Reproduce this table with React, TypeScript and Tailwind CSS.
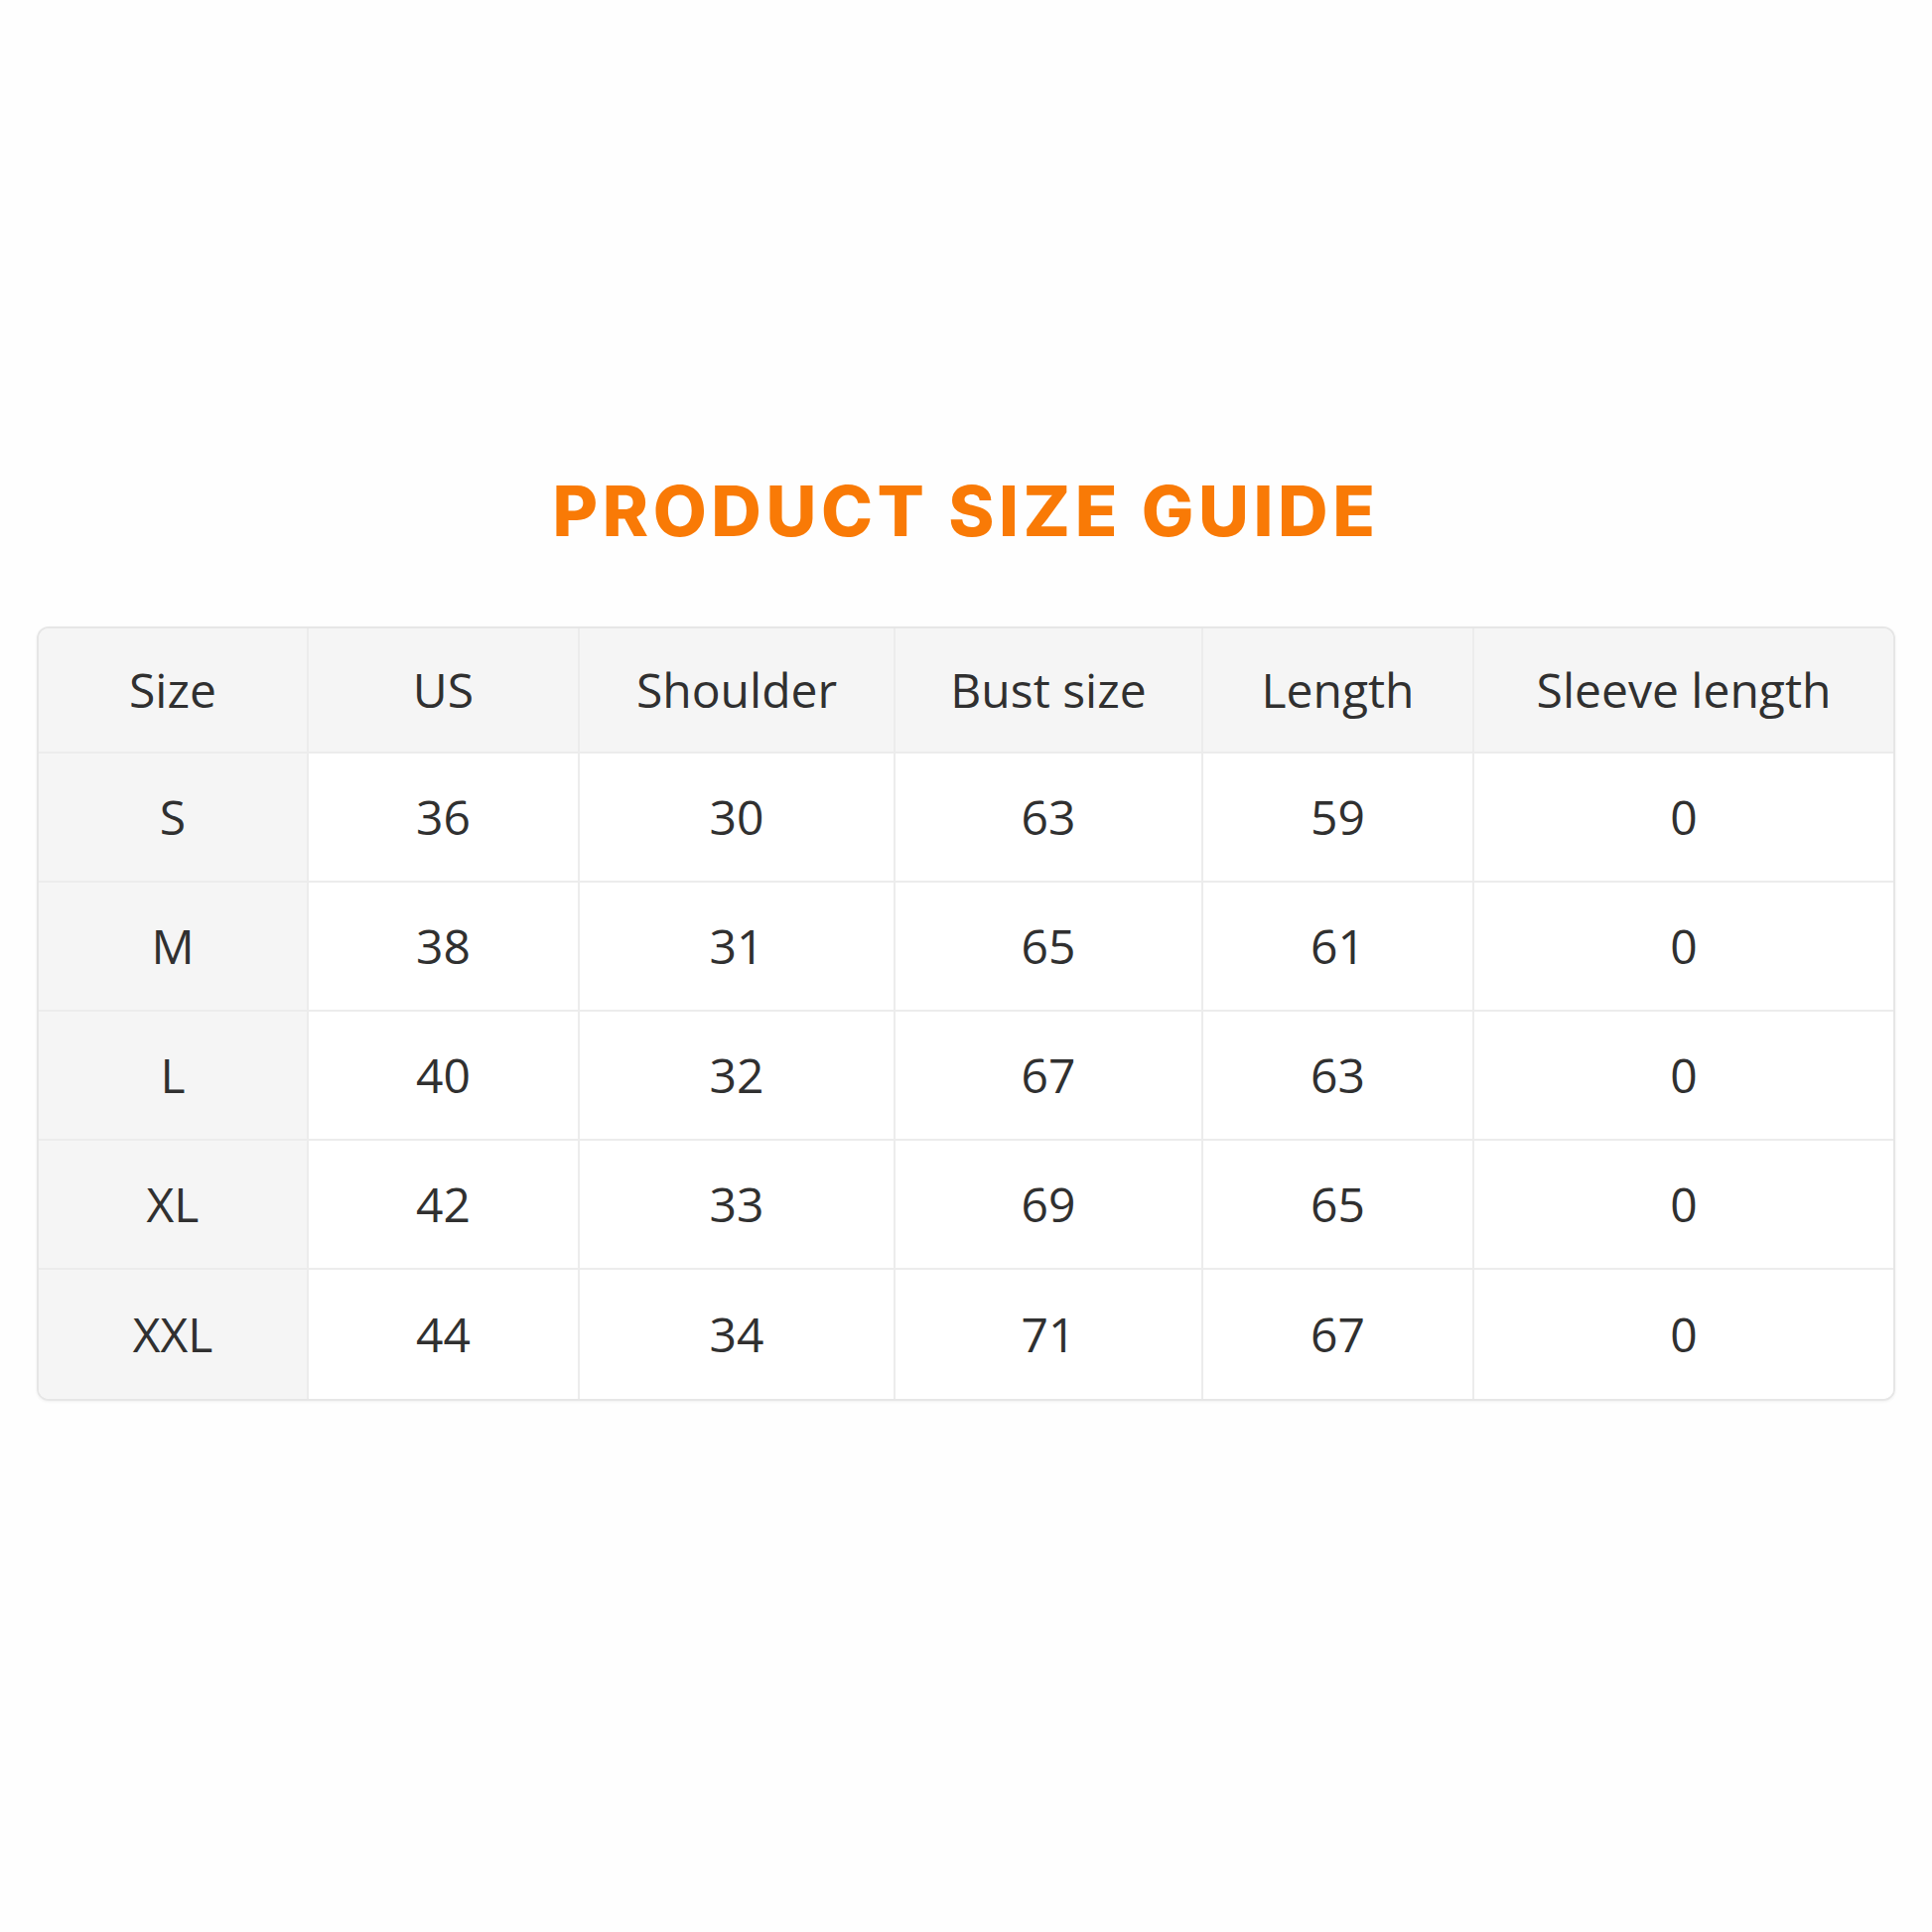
const header = ['Size', 'US', 'Shoulder', 'Bust size', 'Length', 'Sleeve length'];

const rows = [
  ['S', '36', '30', '63', '59', '0'],
  ['M', '38', '31', '65', '61', '0'],
  ['L', '40', '32', '67', '63', '0'],
  ['XL', '42', '33', '69', '65', '0'],
  ['XXL', '44', '34', '71', '67', '0'],
];

export default function App() {
  return (
    <div className="w-[1946px] h-[1946px] bg-[#fefefe] font-['Open_Sans',sans-serif] pt-[477px]">
      {/* Titulo */}
      <h1 className="text-center font-['Inter',sans-serif] font-extrabold text-[70px] leading-[76px] tracking-[0.065em] text-[#f97a06]">
        PRODUCT SIZE GUIDE
      </h1>

      {/* Tabela */}
      <div className="mx-[37px] mt-[78px] rounded-[12px] border-2 border-[#e6e6e6] overflow-hidden shadow-[0_1px_3px_rgba(0,0,0,0.06)]">
        <div className="grid grid-cols-[272px_273px_318px_310px_273px_1fr] text-[48px] text-[#303030]">
          {header.map((h, i) => (
            <div
              key={h}
              className={`h-[126px] flex items-center justify-center bg-[#f5f5f5] border-b-2 border-[#ececec] ${
                i < header.length - 1 ? 'border-r-2' : ''
              }`}
            >
              {h}
            </div>
          ))}
          {rows.map((row, r) =>
            row.map((cell, c) => (
              <div
                key={`${r}-${c}`}
                className={`h-[130px] flex items-center justify-center border-[#ececec] ${
                  c === 0 ? 'bg-[#f5f5f5]' : 'bg-white'
                } ${c < row.length - 1 ? 'border-r-2' : ''} ${r < rows.length - 1 ? 'border-b-2' : ''}`}
              >
                {cell}
              </div>
            ))
          )}
        </div>
      </div>
    </div>
  );
}
